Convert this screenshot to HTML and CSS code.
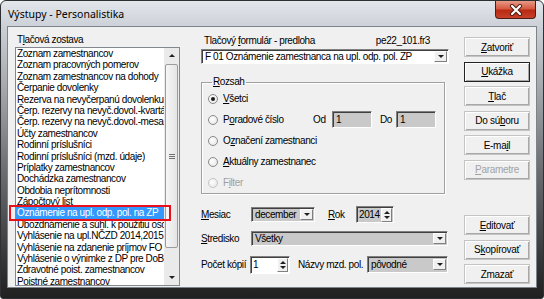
FILE: index.html
```html
<!DOCTYPE html>
<html lang="sk">
<head>
    <meta charset="UTF-8">
    <title>Výstupy - Personalistika</title>
    <link rel="stylesheet" href="styles.css">
</head>
<body>
    <div class="window">
        <div class="titlebar">
            <span class="title">Výstupy - Personalistika</span>
            <div class="close-btn">
                <svg width="16" height="12" viewBox="0 0 16 12">
                    <path d="M4 2 L12 10 M12 2 L4 10" stroke="#4a1a12" stroke-width="4" stroke-linecap="round"/>
                    <path d="M4 2 L12 10 M12 2 L4 10" stroke="#fff" stroke-width="2.2" stroke-linecap="round"/>
                </svg>
            </div>
        </div>

        <div class="client">
            <div class="col-left">
                <div class="caption">T<u>l</u>ačová zostava</div>
                <div class="listbox">
                    <ul class="items">
                        <li>Zoznam zamestnancov</li>
                        <li>Zoznam pracovných pomerov</li>
                        <li>Zoznam zamestnancov na dohody</li>
                        <li>Čerpanie dovolenky</li>
                        <li>Rezerva na nevyčerpanú dovolenku</li>
                        <li>Čerp. rezervy na nevyč.dovol.-kvartál</li>
                        <li>Čerp. rezervy na nevyč.dovol.-mesačne</li>
                        <li>Účty zamestnancov</li>
                        <li>Rodinní príslušníci</li>
                        <li>Rodinní príslušníci (mzd. údaje)</li>
                        <li>Príplatky zamestnancov</li>
                        <li>Dochádzka zamestnancov</li>
                        <li>Obdobia neprítomnosti</li>
                        <li>Zápočtový list</li>
                        <li class="selected">Oznámenie na upl. odp. pol. na ZP</li>
                        <li>Ubozdnámenie a súhl. k použitiu osob. údajov</li>
                        <li>Vyhlásenie na upl.NČZD 2014,2015</li>
                        <li>Vyhlásenie na zdanenie príjmov FO</li>
                        <li>Vyhlásenie o výnimke z DP pre DoB</li>
                        <li>Zdravotné poist. zamestnancov</li>
                        <li>Poistné zamestnancov</li>
                    </ul>
                    <div class="vscroll">
                        <div class="sb-arrow"><span class="tri-up"></span></div>
                        <div class="sb-track">
                            <div class="sb-thumb"><span class="grip"></span></div>
                        </div>
                        <div class="sb-arrow"><span class="tri-down"></span></div>
                    </div>
                    <div class="mark"></div>
                </div>
            </div>

            <div class="col-mid">
                <div class="form-head">
                    <span>Tlačový <u>f</u>ormulár - predloha</span>
                    <span>pe22_101.fr3</span>
                </div>
                <div class="combo white">
                    <span class="val">F 01 Oznámenie zamestnanca na upl. odp. pol. ZP</span>
                    <span class="drop"><span class="tri-down"></span></span>
                </div>

                <fieldset class="range">
                    <legend><u>R</u>ozsah</legend>
                    <div class="radio-row">
                        <span class="radio checked"></span><span><u>V</u>šetci</span>
                    </div>
                    <div class="radio-row">
                        <span class="radio"></span><span class="radio-label">P<u>o</u>radové číslo</span>
                        <span class="od">Od</span><span class="field grey num">1</span>
                        <span class="do">Do</span><span class="field grey num">1</span>
                    </div>
                    <div class="radio-row">
                        <span class="radio"></span><span>O<u>z</u>načení zamestnanci</span>
                    </div>
                    <div class="radio-row">
                        <span class="radio"></span><span><u>A</u>ktuálny zamestnanec</span>
                    </div>
                    <div class="radio-row disabled">
                        <span class="radio"></span><span>F<u>i</u>lter</span>
                    </div>
                </fieldset>

                <div class="row row-month">
                    <span class="lbl"><u>M</u>esiac</span>
                    <div class="combo grey w-month">
                        <span class="val">december</span>
                        <span class="drop"><span class="tri-down"></span></span>
                    </div>
                    <span class="lbl-rok"><u>R</u>ok</span>
                    <div class="spin grey w-year">
                        <span class="val">2014</span>
                        <span class="spin-btns"><span class="tri-up"></span><span class="tri-down"></span></span>
                    </div>
                </div>

                <div class="row row-center">
                    <span class="lbl"><u>S</u>tredisko</span>
                    <div class="combo grey w-center">
                        <span class="val">Všetky</span>
                        <span class="drop"><span class="tri-down"></span></span>
                    </div>
                </div>

                <div class="row row-copies">
                    <span class="lbl">Počet kópií</span>
                    <div class="spin white w-copies">
                        <span class="val">1</span>
                        <span class="spin-btns"><span class="tri-up"></span><span class="tri-down"></span></span>
                    </div>
                    <span class="lbl-names">Názvy mzd. pol.</span>
                    <div class="combo grey w-names">
                        <span class="val">pôvodné</span>
                        <span class="drop"><span class="tri-down"></span></span>
                    </div>
                </div>
            </div>

            <div class="col-right">
                <button class="btn"><u>Z</u>atvoriť</button>
                <button class="btn default"><u>U</u>kážka</button>
                <button class="btn"><u>T</u>lač</button>
                <button class="btn">Do sú<u>b</u>oru</button>
                <button class="btn">E-ma<u>i</u>l</button>
                <button class="btn disabled"><u>P</u>arametre</button>
                <button class="btn gap-top"><u>E</u>ditovať</button>
                <button class="btn">S<u>k</u>opírovať</button>
                <button class="btn">Zmazať</button>
            </div>
        </div>
    </div>
</body>
</html>
```

FILE: styles.css
```css
body {
    margin: 0;
    padding: 0;
    background-color: #fff;
    font-family: "Liberation Sans", Arial, sans-serif;
    font-size: 10px;
    letter-spacing: -0.4px;
    color: #000;
}
u {
    text-decoration: underline;
    text-underline-offset: 1px;
}

/* okno */
.window {
    width: 544px;
    height: 299px;
    box-sizing: border-box;
    border: 1px solid #2e3034;
    border-radius: 6px 6px 3px 3px;
    background: linear-gradient(#e3e7ec 0, #cdd2d8 24px, #a9adb2 80px, #6a6c70 170px, #3a3b3d 250px, #1f1f20 299px);
    padding: 0 6px 10px 6px;
}
.titlebar {
    height: 25px;
    display: flex;
    align-items: flex-start;
    justify-content: space-between;
}
.title {
    font-family: "Noto Sans", "Open Sans", sans-serif;
    font-size: 10.5px;
    letter-spacing: 0;
    margin: 6px 0 0 1px;
    color: #000;
}
.close-btn {
    width: 41px;
    height: 18px;
    margin-right: 1px;
    border: 1px solid #4b1d17;
    border-top: none;
    border-radius: 0 0 4px 4px;
    background: linear-gradient(#e89a86 0, #d65a42 45%, #b82a14 55%, #c8412a 100%);
    display: flex;
    align-items: center;
    justify-content: center;
    box-sizing: border-box;
}

.client {
    height: 262px;
    box-sizing: border-box;
    border: 1px solid #7d838a;
    background-color: #f0f0f0;
    display: flex;
    padding: 0 0 0 7px;
}

/* lavy stlpec */
.col-left {
    width: 165px;
    padding-top: 7px;
}
.caption {
    height: 12px;
    line-height: 12px;
    padding-left: 2px;
}
.listbox {
    position: relative;
    margin-top: 1px;
    height: 239px;
    box-sizing: border-box;
    border: 1px solid #828790;
    background-color: #fff;
    display: flex;
}
.items {
    list-style: none;
    margin: 0;
    padding: 0;
    width: 149px;
    overflow: hidden;
}
.items li {
    height: 11.4px;
    line-height: 11.4px;
    padding-left: 1px;
    white-space: nowrap;
}
.items li.selected {
    background-color: #3399ff;
    color: #fff;
}
.mark {
    position: absolute;
    left: -7px;
    top: 157px;
    width: 158px;
    height: 12px;
    border: 2px solid #e8101a;
}
.vscroll {
    width: 15px;
    display: flex;
    flex-direction: column;
    background-color: #eaeaea;
}
.sb-arrow {
    height: 15px;
    display: flex;
    align-items: center;
    justify-content: center;
}
.sb-track {
    flex: 1;
    padding: 1px 0 22px 0;
    display: flex;
}
.sb-thumb {
    flex: 1;
    margin: 0 1px;
    border: 1px solid #9c9c9c;
    border-radius: 2px;
    background: linear-gradient(to right, #f6f6f6, #e4e4e4);
    display: flex;
    align-items: center;
    justify-content: center;
}
.grip {
    width: 6px;
    height: 5px;
    border-top: 1px solid #707070;
    border-bottom: 1px solid #707070;
    box-sizing: border-box;
    background: linear-gradient(transparent 1px, #707070 1px, #707070 2px, transparent 2px);
}
.tri-up,
.tri-down {
    display: block;
    width: 0;
    height: 0;
    border-left: 3px solid transparent;
    border-right: 3px solid transparent;
}
.tri-up {
    border-bottom: 3px solid #202020;
}
.tri-down {
    border-top: 3px solid #202020;
}

/* stredny stlpec */
.col-mid {
    width: 248px;
    margin-left: 21px;
    padding-top: 8px;
    display: flex;
    flex-direction: column;
}
.form-head {
    height: 12px;
    line-height: 12px;
    display: flex;
    justify-content: space-between;
    padding: 0 19px 0 3px;
}
.combo,
.spin,
.field {
    box-sizing: border-box;
    border: 1px solid;
    border-color: #808080 #fff #fff #808080;
    box-shadow: inset 1px 1px 0 #404040;
    display: flex;
    align-items: center;
}
.white {
    background-color: #fff;
}
.grey {
    background-color: #c9c9c9;
}
.combo .val,
.spin .val {
    flex: 1;
    padding-left: 3px;
    white-space: nowrap;
    overflow: hidden;
}
.spin .val {
    padding-left: 2px;
}
.drop {
    width: 13px;
    height: 11px;
    margin-right: 1px;
    box-sizing: border-box;
    background-color: #f0f0f0;
    border: 1px solid;
    border-color: #fff #808080 #808080 #fff;
    display: flex;
    align-items: center;
    justify-content: center;
}
.spin-btns {
    width: 9px;
    height: 12px;
    margin-right: 1px;
    background-color: #f0f0f0;
    border: 1px solid;
    border-color: #fff #808080 #808080 #fff;
    display: flex;
    flex-direction: column;
    align-items: center;
    justify-content: center;
    gap: 2px;
}
.combo.white {
    margin-top: 2px;
    height: 15px;
}

.range {
    margin: 12px 0 0 0;
    padding: 0 0 0 6px;
    width: 244px;
    box-sizing: border-box;
    border: 1px solid #a0a0a0;
    box-shadow: inset 1px 1px 0 #fff, 1px 1px 0 #fff;
}
.range legend {
    padding: 0 1px;
    margin-left: 4px;
    line-height: 12px;
}
.radio-row {
    height: 21px;
    display: flex;
    align-items: center;
}
.radio {
    width: 10px;
    height: 10px;
    box-sizing: border-box;
    border-radius: 50%;
    border: 1px solid #8a8a8a;
    background: radial-gradient(circle at 40% 40%, #fff, #e2e2e2);
    margin-right: 5px;
    display: flex;
    align-items: center;
    justify-content: center;
}
.radio.checked::after {
    content: "";
    width: 4px;
    height: 4px;
    border-radius: 50%;
    background-color: #1a1a1a;
}
.radio-label {
    width: 90px;
}
.od {
    width: 19px;
}
.do {
    margin-left: 8px;
    width: 16px;
}
.field {
    width: 40px;
    height: 17px;
}
.field.num {
    padding-left: 3px;
}
.disabled {
    color: #a0a0a0;
}
.disabled .radio {
    border-color: #c4c4c4;
}

.row {
    display: flex;
    align-items: center;
    height: 19px;
}
.row-month {
    margin-top: 11px;
}
.row-center {
    margin-top: 5px;
}
.row-copies {
    margin-top: 7px;
}
.lbl {
    width: 50px;
    white-space: nowrap;
}
.w-month {
    width: 64px;
    height: 15px;
}
.lbl-rok {
    margin-left: 13px;
    width: 28px;
}
.w-year {
    width: 38px;
    height: 17px;
}
.w-center {
    width: 197px;
    height: 15px;
}
.w-copies {
    width: 40px;
    height: 18px;
    margin-left: -1px;
}
.lbl-names {
    margin-left: 8px;
    width: 69px;
    white-space: nowrap;
}
.w-names {
    width: 81px;
    height: 17px;
}

/* tlacidla */
.col-right {
    width: 66px;
    margin-left: 15px;
    padding-top: 10px;
    display: flex;
    flex-direction: column;
    gap: 4.5px;
}
.btn {
    height: 20px;
    padding: 0;
    font-family: inherit;
    font-size: 10px;
    letter-spacing: -0.3px;
    color: #000;
    background-color: #f0f0f0;
    border: 1px solid #c4c4c4;
    box-shadow: inset 1px 1px 0 #fff, inset -1px -1px 0 #a8a8a8;
    cursor: pointer;
}
.btn.default {
    border-color: #222;
}
.btn.disabled {
    color: #a3a3a3;
}
.btn.gap-top {
    margin-top: 31px;
}
```
